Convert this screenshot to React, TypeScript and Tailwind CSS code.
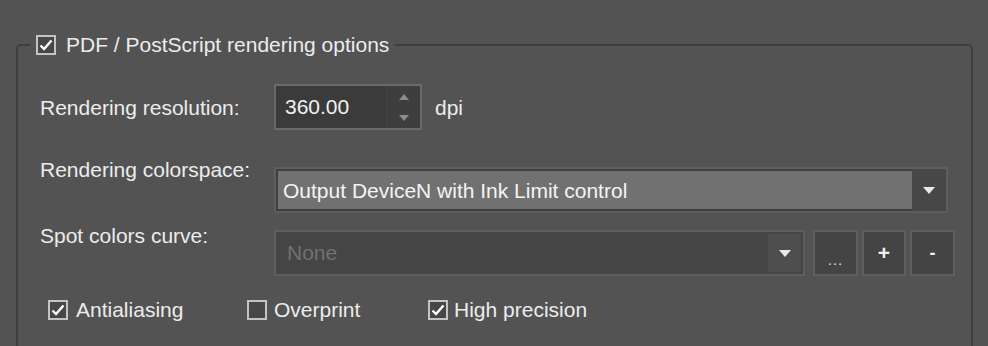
function CheckBox({ checked }: { checked: boolean }) {
  return (
    <span className="flex h-[20px] w-[20px] shrink-0 items-center justify-center border-2 border-[#c4c4c4] bg-[#474747]">
      {checked && (
        <svg width="14" height="12" viewBox="0 0 14 12">
          <path d="M1.5 6.5 L5 10 L12.5 1.5" fill="none" stroke="#ffffff" strokeWidth="2.4" />
        </svg>
      )}
    </span>
  );
}

function Triangle({ color = "#e8e8e8" }: { color?: string }) {
  return (
    <svg width="12" height="7" viewBox="0 0 12 7">
      <path d="M0 0 H12 L6 7 Z" fill={color} />
    </svg>
  );
}

export default function App() {
  const text = "text-[21px] leading-[24px] text-[#ececec]";

  return (
    <div
      className="h-[346px] w-[988px] overflow-hidden bg-[#535353] pl-[16px] pt-[33px]"
      style={{ fontFamily: '"Liberation Sans", Arial, sans-serif' }}
    >
      <fieldset className="h-[340px] w-[957px] rounded-[5px] border-2 border-[#3e3e3e]">
        <legend className="ml-[12px] px-[6px]">
          <span className="flex items-center gap-[10px]">
            <CheckBox checked />
            <span className={text}>PDF / PostScript rendering options</span>
          </span>
        </legend>

        {/* resolution */}
        <div className="mt-[27px] flex items-center pl-[22px]">
          <span className={`w-[234px] pt-[2px] ${text}`}>Rendering resolution:</span>
          <div className="flex h-[46px] w-[148px] border-2 border-[#6a6a6a] bg-[#3b3b3b]">
            <div className="flex flex-1 items-center pl-[9px] text-[21px] text-[#f2f2f2]">360.00</div>
            <div className="flex w-[34px] flex-col border-l border-[#444444] bg-[#3e3e3e]">
              <div className="flex flex-1 items-center justify-center">
                <svg width="10" height="6" viewBox="0 0 10 6">
                  <path d="M0 6 H10 L5 0 Z" fill="#8c8c8c" />
                </svg>
              </div>
              <div className="flex flex-1 items-center justify-center">
                <svg width="10" height="6" viewBox="0 0 10 6">
                  <path d="M0 0 H10 L5 6 Z" fill="#8c8c8c" />
                </svg>
              </div>
            </div>
          </div>
          <span className={`ml-[13px] pt-[2px] ${text}`}>dpi</span>
        </div>

        {/* colorspace */}
        <div className="mt-[28px] flex items-start pl-[22px]">
          <span className={`w-[234px] ${text}`}>Rendering colorspace:</span>
          <div className="mt-[9px] flex h-[46px] w-[674px] border-2 border-[#5e5e5e]">
            <div className="flex flex-1 border-2 border-r-0 border-[#3f3f3f] bg-[#717171]">
              <span className="flex items-center pl-[5px] pt-[2px] text-[21px] text-[#f4f4f4]">
                Output DeviceN with Ink Limit control
              </span>
            </div>
            <div className="flex w-[34px] items-center justify-center bg-[#474747]">
              <Triangle />
            </div>
          </div>
        </div>

        {/* spot colors */}
        <div className="mt-[11px] flex items-start pl-[22px]">
          <span className={`w-[234px] ${text}`}>Spot colors curve:</span>
          <div className="mt-[6px] flex gap-[4px]">
            <div className="mr-[4px] flex h-[46px] w-[531px] border-2 border-[#5e5e5e] bg-[#454545]">
              <span className="flex flex-1 items-center pl-[11px] text-[21px] text-[#717171]">None</span>
              <div className="m-[2px] flex w-[33px] items-center justify-center bg-[#4e4e4e]">
                <Triangle />
              </div>
            </div>
            <button className="flex h-[46px] w-[45px] items-end justify-center border-2 border-[#5e5e5e] bg-[#444444] pb-[9px]">
              <span className="text-[15px] leading-[10px] tracking-[1px] text-[#e0e0e0]">...</span>
            </button>
            <button className="flex h-[46px] w-[44px] items-center justify-center border-2 border-[#5e5e5e] bg-[#444444] text-[21px] font-bold text-[#f0f0f0]">
              +
            </button>
            <button className="flex h-[46px] w-[45px] items-center justify-center border-2 border-[#5e5e5e] bg-[#444444] text-[18px] font-bold text-[#f0f0f0]">
              -
            </button>
          </div>
        </div>

        {/* options */}
        <div className="mt-[22px] flex items-center pl-[30px]">
          <label className="flex w-[199px] items-center gap-[8px]">
            <CheckBox checked />
            <span className={text}>Antialiasing</span>
          </label>
          <label className="flex w-[181px] items-center gap-[7px]">
            <CheckBox checked={false} />
            <span className={text}>Overprint</span>
          </label>
          <label className="flex items-center gap-[6px]">
            <CheckBox checked />
            <span className={text}>High precision</span>
          </label>
        </div>
      </fieldset>
    </div>
  );
}
